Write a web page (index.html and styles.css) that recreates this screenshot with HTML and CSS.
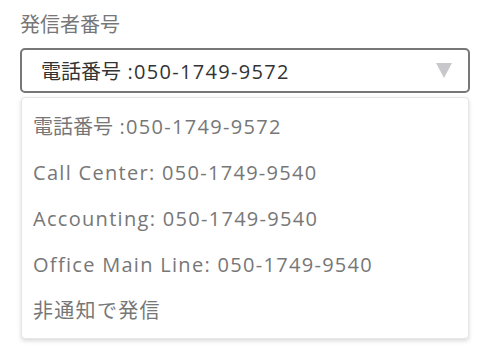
FILE: index.html
```html
<html>
<head>
    <link rel="stylesheet" href="styles.css">
</head>
<body>
    <div class="field">
        <div class="field-label ja">発信者番号</div>
        <div class="select-box">
            <span class="select-value"><span class="ja">電話番号</span> :050-1749-9572</span>
            <span class="select-arrow"></span>
        </div>
        <ul class="options">
            <li><span class="ja">電話番号</span> :050-1749-9572</li>
            <li>Call Center: 050-1749-9540</li>
            <li>Accounting: 050-1749-9540</li>
            <li>Office Main Line: 050-1749-9540</li>
            <li class="ja">非通知で発信</li>
        </ul>
    </div>
</body>
</html>
```

FILE: styles.css
```css
body {
    margin: 0;
    background-color: #fff;
    font-family: "Open Sans", "Noto Sans CJK JP", sans-serif;
}

.ja {
    letter-spacing: 0;
}

.field {
    padding: 11px 18px 0 20px;
}

.field-label {
    font-size: 20px;
    line-height: 28px;
    color: #777;
}

.select-box {
    display: flex;
    align-items: center;
    justify-content: space-between;
    box-sizing: border-box;
    height: 45px;
    margin-top: 9px;
    padding: 0 16px 0 19px;
    border: 2px solid #777;
    border-radius: 5px;
}

.select-value {
    font-size: 20px;
    letter-spacing: 1.3px;
    color: #333;
}

.select-arrow {
    width: 0;
    height: 0;
    border-left: 8px solid transparent;
    border-right: 8px solid transparent;
    border-top: 15px solid #c8c8cc;
}

.options {
    list-style: none;
    margin: 4px 1px 0 1px;
    padding: 6px 0 4px 0;
    background-color: #fff;
    border: 1px solid #e6e6e2;
    border-radius: 4px;
    box-shadow: 0 2px 4px rgba(0, 0, 0, 0.15);
}

.options li {
    height: 46px;
    line-height: 46px;
    padding-left: 11px;
    font-size: 20px;
    letter-spacing: 1.3px;
    color: #777;
}
```
